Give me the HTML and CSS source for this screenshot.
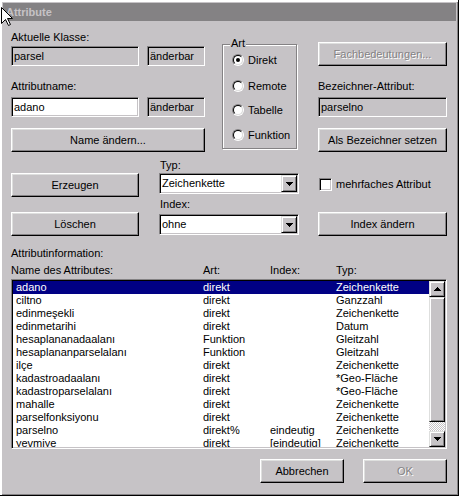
FILE: index.html
```html
<!DOCTYPE html>
<html>
<head>
<meta charset="utf-8">
<link rel="stylesheet" href="styles.css">
</head>
<body>
<div class="window">
  <div class="titlebar">Attribute</div>
  <div class="client">
    <div class="band">
      <div class="colA1">
        <div class="label">Aktuelle Klasse:</div>
        <div class="frow mt2">
          <div class="field w128">parsel</div>
          <div class="field w58">änderbar</div>
        </div>
        <div class="label mt14">Attributname:</div>
        <div class="frow mt4">
          <div class="field w128 white">adano</div>
          <div class="field w58">änderbar</div>
        </div>
        <div class="btn mt11">Name ändern...</div>
      </div>
      <div class="group">
        <div class="legend">Art</div>
        <div class="radio r1"><span class="rb"><span class="rbi"><span class="dot"></span></span></span><span>Direkt</span></div>
        <div class="radio r2"><span class="rb"><span class="rbi"></span></span><span>Remote</span></div>
        <div class="radio r3"><span class="rb"><span class="rbi"></span></span><span>Tabelle</span></div>
        <div class="radio r4"><span class="rb"><span class="rbi"></span></span><span>Funktion</span></div>
      </div>
      <div class="colC1">
        <div class="btn disabled mt11">Fachbedeutungen...</div>
        <div class="label mt14">Bezeichner-Attribut:</div>
        <div class="field mt4">parselno</div>
        <div class="btn mt11">Als Bezeichner setzen</div>
      </div>
    </div>
    <div class="band">
      <div class="colA2">
        <div class="btn mt21">Erzeugen</div>
        <div class="btn mt15">Löschen</div>
      </div>
      <div class="colB2">
        <div class="label pl1 mt7">Typ:</div>
        <div class="combo mt1"><span class="ctext">Zeichenkette</span><span class="ddb"><svg class="arr" width="7" height="4" viewBox="0 0 7 4"><path d="M0 0h7v1H0zM1 1h5v1H1zM2 2h3v1H2zM3 3h1v1H3z"/></svg></span></div>
        <div class="label pl1 mt4">Index:</div>
        <div class="combo mt3"><span class="ctext">ohne</span><span class="ddb"><svg class="arr" width="7" height="4" viewBox="0 0 7 4"><path d="M0 0h7v1H0zM1 1h5v1H1zM2 2h3v1H2zM3 3h1v1H3z"/></svg></span></div>
      </div>
      <div class="colC2">
        <div class="check mt26"><span class="cb"></span><span>mehrfaches Attribut</span></div>
        <div class="btn mt21">Index ändern</div>
      </div>
    </div>
    <div class="label mt11">Attributinformation:</div>
    <div class="lhead mt4"><span>Name des Attributes:</span><span>Art:</span><span>Index:</span><span>Typ:</span></div>
    <div class="list">
      <div class="rows">
        <div class="lrow sel"><span>adano</span><span>direkt</span><span></span><span>Zeichenkette</span></div>
        <div class="lrow"><span>ciltno</span><span>direkt</span><span></span><span>Ganzzahl</span></div>
        <div class="lrow"><span>edinmeşekli</span><span>direkt</span><span></span><span>Zeichenkette</span></div>
        <div class="lrow"><span>edinmetarihi</span><span>direkt</span><span></span><span>Datum</span></div>
        <div class="lrow"><span>hesaplananadaalanı</span><span>Funktion</span><span></span><span>Gleitzahl</span></div>
        <div class="lrow"><span>hesaplananparselalanı</span><span>Funktion</span><span></span><span>Gleitzahl</span></div>
        <div class="lrow"><span>ilçe</span><span>direkt</span><span></span><span>Zeichenkette</span></div>
        <div class="lrow"><span>kadastroadaalanı</span><span>direkt</span><span></span><span>*Geo-Fläche</span></div>
        <div class="lrow"><span>kadastroparselalanı</span><span>direkt</span><span></span><span>*Geo-Fläche</span></div>
        <div class="lrow"><span>mahalle</span><span>direkt</span><span></span><span>Zeichenkette</span></div>
        <div class="lrow"><span>parselfonksiyonu</span><span>direkt</span><span></span><span>Zeichenkette</span></div>
        <div class="lrow"><span>parselno</span><span>direkt%</span><span>eindeutig</span><span>Zeichenkette</span></div>
        <div class="lrow"><span>yevmiye</span><span>direkt</span><span>[eindeutig]</span><span>Zeichenkette</span></div>
      </div>
      <div class="sb">
        <div class="sbtn"><svg class="arr" width="7" height="4" viewBox="0 0 7 4"><path d="M3 0h1v1H3zM2 1h3v1H2zM1 2h5v1H1zM0 3h7v1H0z"/></svg></div>
        <div class="thumb"></div>
        <div class="track"></div>
        <div class="sbtn"><svg class="arr" width="7" height="4" viewBox="0 0 7 4"><path d="M0 0h7v1H0zM1 1h5v1H1zM2 2h3v1H2zM3 3h1v1H3z"/></svg></div>
      </div>
    </div>
    <div class="footer">
      <div class="btn w84">Abbrechen</div>
      <div class="btn w84 disabled">OK</div>
    </div>
  </div>
  <svg class="cursor" width="13" height="20" viewBox="0 0 13 20"><polygon points="0.5,0.5 0.5,16.5 4.5,12.5 7.5,18.5 9.5,17.5 6.5,11.5 11.5,11.5" fill="#fff" stroke="#000" stroke-width="1"/></svg>
</div>
</body>
</html>
```
FILE: styles.css
```css
html, body {
  margin: 0;
  padding: 0;
  background: #c6c3c6;
}

.window {
  position: relative;
  width: 459px;
  height: 496px;
  box-sizing: border-box;
  padding: 3px;
  background: #c6c3c6;
  box-shadow: inset -1px -1px #000, inset 2px 2px #fff, inset -2px -2px #848284;
  font: 11px/13px "Liberation Sans", Arial, sans-serif;
  color: #000;
  overflow: hidden;
}

.titlebar {
  height: 18px;
  line-height: 18px;
  background: #848284;
  color: #c6c3c6;
  font-weight: bold;
  padding-left: 3px;
}

.client {
  padding: 10px 9px 0 8px;
}

.band {
  display: flex;
  align-items: flex-start;
}

.colA1 { width: 194px; display: flex; flex-direction: column; }
.colC1 { width: 129px; margin-left: 21px; display: flex; flex-direction: column; }
.colA2 { width: 128px; display: flex; flex-direction: column; }
.colB2 { width: 140px; margin-left: 20px; display: flex; flex-direction: column; }
.colC2 { width: 129px; margin-left: 19px; display: flex; flex-direction: column; }

.label { height: 13px; white-space: nowrap; }
.pl1 { padding-left: 1px; }

.mt1 { margin-top: 1px; }
.mt2 { margin-top: 2px; }
.mt3 { margin-top: 3px; }
.mt4 { margin-top: 4px; }
.mt7 { margin-top: 7px; }
.mt11 { margin-top: 11px; }
.mt14 { margin-top: 14px; }
.mt15 { margin-top: 15px; }
.mt21 { margin-top: 21px; }
.mt26 { margin-top: 26px; }

.frow { display: flex; gap: 8px; }

.field {
  box-sizing: border-box;
  height: 20px;
  line-height: 18px;
  border: 1px solid;
  border-color: #848284 #fff #fff #848284;
  box-shadow: inset 1px 1px #000, inset -1px -1px #c6c3c6;
  padding: 0 2px;
  white-space: nowrap;
  overflow: hidden;
}
.w128 { width: 128px; }
.w58 { width: 58px; }
.w84 { width: 84px; }
.white { background: #fff; }

.btn {
  box-sizing: border-box;
  height: 24px;
  border: 1px solid;
  border-color: #fff #000 #000 #fff;
  box-shadow: inset -1px -1px #848284, inset 1px 1px #dedfde;
  display: flex;
  align-items: center;
  justify-content: center;
  white-space: nowrap;
}
.btn.disabled {
  color: #848284;
  text-shadow: 1px 1px 0 #fff;
}

.group {
  box-sizing: border-box;
  width: 75px;
  height: 105px;
  margin: 13px 0 0 17px;
  border: 1px solid #848284;
  box-shadow: 1px 1px #fff, inset 1px 1px #fff;
  padding-left: 9px;
}
.legend {
  width: fit-content;
  margin: -8px 0 0 -2px;
  padding: 0 1px;
  height: 13px;
  background: #c6c3c6;
}
.radio {
  display: flex;
  align-items: flex-start;
  gap: 4px;
  height: 13px;
}
.r1 { margin-top: 4px; }
.r2 { margin-top: 13px; }
.r3 { margin-top: 11px; }
.r4 { margin-top: 12px; }
.rb {
  box-sizing: border-box;
  width: 12px;
  height: 12px;
  border-radius: 50%;
  border: 1px solid;
  border-color: #848284 #fff #fff #848284;
  display: flex;
}
.rbi {
  box-sizing: border-box;
  width: 10px;
  height: 10px;
  border-radius: 50%;
  border: 1px solid;
  border-color: #000 #dedfde #dedfde #000;
  background: #fff;
  display: flex;
  align-items: center;
  justify-content: center;
}
.dot {
  width: 4px;
  height: 4px;
  border-radius: 50%;
  background: #000;
}

.combo {
  box-sizing: border-box;
  height: 21px;
  padding: 1px;
  background: #fff;
  border: 1px solid;
  border-color: #848284 #fff #fff #848284;
  box-shadow: inset 1px 1px #000, inset -1px -1px #c6c3c6;
  display: flex;
}
.ctext {
  flex: 1;
  padding-left: 1px;
  line-height: 17px;
  white-space: nowrap;
}
.ddb, .sbtn {
  box-sizing: border-box;
  width: 16px;
  border: 1px solid;
  border-color: #dedfde #000 #000 #dedfde;
  box-shadow: inset 1px 1px #fff, inset -1px -1px #848284;
  background: #c6c3c6;
  display: flex;
  align-items: center;
  justify-content: center;
}
.ddb { height: 17px; }
.sbtn { height: 16px; flex: none; }
.arr { display: block; shape-rendering: crispEdges; }

.check {
  display: flex;
  align-items: center;
  gap: 4px;
  height: 13px;
  padding-left: 1px;
  white-space: nowrap;
}
.cb {
  box-sizing: border-box;
  width: 13px;
  height: 13px;
  background: #fff;
  border: 1px solid;
  border-color: #848284 #fff #fff #848284;
  box-shadow: inset 1px 1px #000, inset -1px -1px #c6c3c6;
}

.lhead {
  display: grid;
  grid-template-columns: 192px 67px 66px 1fr;
  height: 13px;
  white-space: nowrap;
}

.list {
  margin-top: 2px;
  height: 170px;
  box-sizing: border-box;
  padding: 1px;
  background: #fff;
  border: 1px solid;
  border-color: #848284 #fff #fff #848284;
  box-shadow: inset 1px 1px #000, inset -1px -1px #c6c3c6;
  display: flex;
  overflow: hidden;
}
.rows {
  flex: 1;
  overflow: hidden;
}
.lrow {
  display: grid;
  grid-template-columns: 187px 67px 66px 1fr;
  height: 13px;
  padding-left: 3px;
  white-space: nowrap;
}
.lrow.sel {
  background: #000084;
  color: #fff;
}
.sb {
  width: 16px;
  display: flex;
  flex-direction: column;
}
.thumb {
  box-sizing: border-box;
  height: 125px;
  flex: none;
  border: 1px solid;
  border-color: #dedfde #000 #000 #dedfde;
  box-shadow: inset 1px 1px #fff, inset -1px -1px #848284;
  background: #c6c3c6;
}
.track {
  flex: 1;
  background-image: repeating-conic-gradient(#c6c3c6 0% 25%, #fff 0% 50%);
  background-size: 2px 2px;
}

.footer {
  margin-top: 10px;
  display: flex;
  justify-content: flex-end;
  gap: 19px;
}

.cursor {
  position: absolute;
  left: 1px;
  top: 7px;
}
```
